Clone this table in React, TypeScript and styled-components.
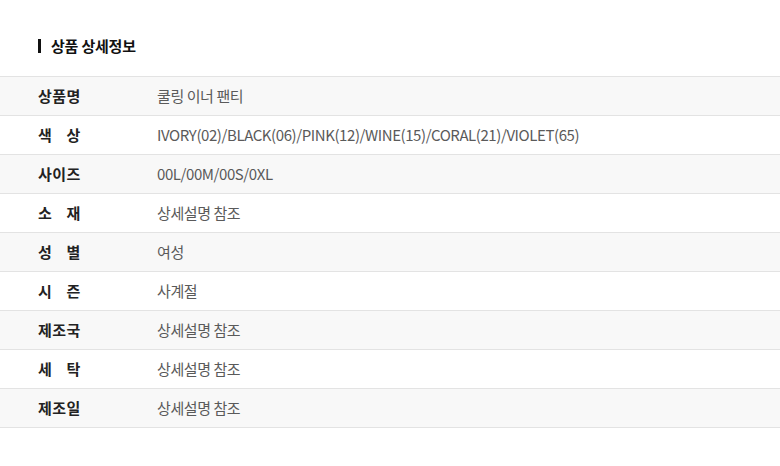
import React from 'react'
import styled, { createGlobalStyle } from 'styled-components'

const GlobalStyle = createGlobalStyle`
  html, body {
    margin: 0;
    padding: 0;
    background: #fff;
  }
  body {
    font-family: 'Noto Sans CJK KR', 'Noto Sans', sans-serif;
    color: #222;
  }
`

const Section = styled.section`
  width: 780px;
  padding-top: 36px;
`

const Title = styled.h2`
  display: flex;
  align-items: center;
  gap: 10px;
  margin: 0 0 20px 38px;
  font-size: 15px;
  font-weight: 700;
  line-height: 20px;
  color: #111;
  letter-spacing: -0.2px;

  &::before {
    content: '';
    width: 3px;
    height: 14px;
    background: #111;
  }
`

const Table = styled.div`
  border-top: 1px solid #e3e3e3;
`

const Row = styled.div<{ $shaded: boolean }>`
  display: grid;
  grid-template-columns: 119px 1fr;
  align-items: center;
  height: 38px;
  padding-left: 38px;
  border-bottom: 1px solid #e3e3e3;
  background: ${p => (p.$shaded ? '#f8f8f8' : '#fff')};
`

const Label = styled.div`
  display: flex;
  justify-content: space-between;
  width: 42px;
  margin-bottom: 2px;
  font-size: 15px;
  font-weight: 700;
  color: #222;
  letter-spacing: -0.3px;
`

const Value = styled.div`
  margin-bottom: 2px;
  font-size: 15px;
  color: #5a5a5a;
  letter-spacing: -0.42px;
`

const rows: [string, string][] = [
  ['상품명', '쿨링 이너 팬티'],
  ['색상', 'IVORY(02)/BLACK(06)/PINK(12)/WINE(15)/CORAL(21)/VIOLET(65)'],
  ['사이즈', '00L/00M/00S/0XL'],
  ['소재', '상세설명 참조'],
  ['성별', '여성'],
  ['시즌', '사계절'],
  ['제조국', '상세설명 참조'],
  ['세탁', '상세설명 참조'],
  ['제조일', '상세설명 참조'],
]

export default function App() {
  return (
    <>
      <GlobalStyle />
      <Section>
        <Title>상품 상세정보</Title>
        <Table>
          {rows.map(([label, value], i) => (
            <Row key={label} $shaded={i % 2 === 0}>
              <Label>
                {label.split('').map((ch, j) => (
                  <span key={j}>{ch}</span>
                ))}
              </Label>
              <Value>{value}</Value>
            </Row>
          ))}
        </Table>
      </Section>
    </>
  )
}
